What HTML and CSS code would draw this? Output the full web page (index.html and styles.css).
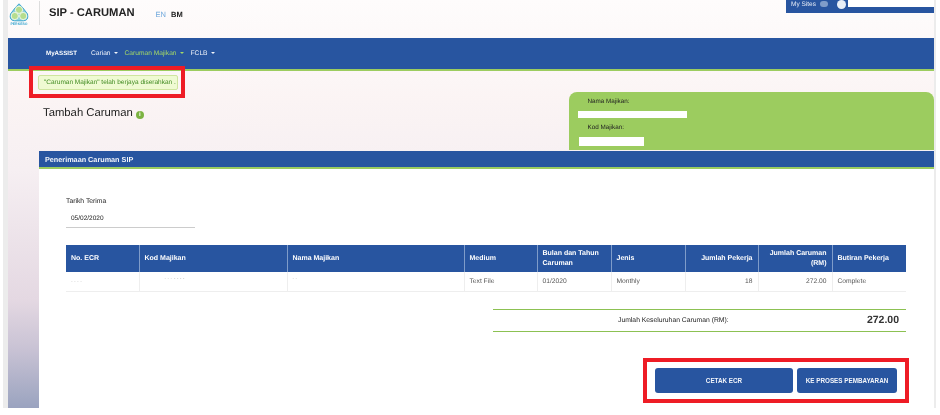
FILE: index.html
```html
<!DOCTYPE html>
<html lang="ms">
<head>
    <meta charset="UTF-8">
    <title>SIP - Caruman</title>
    <link rel="stylesheet" href="styles.css">
</head>
<body>
    <div class="frame">
        <div class="page">
            <!-- top bar -->
            <div class="topbar">
                <div class="logo">
                    <svg width="20" height="19" viewBox="0 0 20 19">
                        <path d="M10 0.8 L14 5 L18.5 11 Q20 17.5 14.5 17.8 L5.5 17.8 Q0 17.5 1.5 11 L6 5 Z" fill="#8fd0dc" stroke="#3fa8d0" stroke-width="1"/>
                        <circle cx="10" cy="6.8" r="3.6" fill="#b5dd8e" stroke="#eef8e6" stroke-width="1"/>
                        <circle cx="5.8" cy="13" r="3.6" fill="#b5dd8e" stroke="#eef8e6" stroke-width="1"/>
                        <circle cx="14.2" cy="13" r="3.6" fill="#b5dd8e" stroke="#eef8e6" stroke-width="1"/>
                    </svg>
                    <span class="logo-name">PERKESO</span>
                </div>
                <div class="divider"></div>
                <div class="app-name">SIP - CARUMAN</div>
                <div class="lang"><span class="lang-en">EN</span><span class="lang-bm">BM</span></div>
                <div class="sites">
                    <span class="sites-label">My Sites</span>
                    <span class="sites-arrow"></span>
                    <span class="avatar"></span>
                    <span class="sites-user"></span>
                </div>
            </div>

            <!-- menu -->
            <div class="menu">
                <a class="menu-first">MyASSIST</a>
                <a class="caret">Carian</a>
                <a class="caret active">Caruman Majikan</a>
                <a class="caret">FCLB</a>
            </div>

            <div class="intro">
                <div class="intro-left">
                    <div class="alert">"Caruman Majikan" telah berjaya diserahkan .</div>
                    <h1 class="title">Tambah Caruman <span class="info">i</span></h1>
                </div>
                <div class="employer">
                    <div class="employer-label">Nama Majikan:</div>
                    <div class="blank blank-name"></div>
                    <div class="employer-label">Kod Majikan:</div>
                    <div class="blank blank-code"></div>
                </div>
            </div>

            <div class="panel">
                <div class="panel-head">Penerimaan Caruman SIP</div>
                <div class="panel-body">
                    <div class="date-label">Tarikh Terima</div>
                    <div class="date-value">05/02/2020</div>

                    <table class="ecr">
                        <colgroup>
                            <col class="w73"><col class="w148"><col class="w177"><col class="w73"><col class="w74">
                            <col class="w74"><col class="w73"><col class="w74"><col class="w74">
                        </colgroup>
                        <thead>
                            <tr>
                                <th>No. ECR</th>
                                <th>Kod Majikan</th>
                                <th>Nama Majikan</th>
                                <th>Medium</th>
                                <th>Bulan dan Tahun Caruman</th>
                                <th>Jenis</th>
                                <th class="num">Jumlah Pekerja</th>
                                <th class="num">Jumlah Caruman (RM)</th>
                                <th>Butiran Pekerja</th>
                            </tr>
                        </thead>
                        <tbody>
                            <tr>
                                <td><span class="ghost ghost-low">- - - -</span></td>
                                <td><span class="ghost ghost-code">- - - - - - -</span></td>
                                <td><span class="ghost">- -</span></td>
                                <td>Text File</td>
                                <td>01/2020</td>
                                <td>Monthly</td>
                                <td class="num">18</td>
                                <td class="num">272.00</td>
                                <td>Complete</td>
                            </tr>
                        </tbody>
                    </table>

                    <div class="total">
                        <span class="total-label">Jumlah Keseluruhan Caruman (RM):</span>
                        <span class="total-value">272.00</span>
                    </div>

                    <div class="actions">
                        <button class="btn btn-print">CETAK ECR</button>
                        <button class="btn btn-pay">KE PROSES PEMBAYARAN</button>
                    </div>
                </div>
            </div>

            <!-- red marks drawn over the screenshot -->
            <div class="mark mark-alert"></div>
            <div class="mark mark-actions"></div>
        </div>
    </div>
</body>
</html>
```

FILE: styles.css
```css
* {
    margin: 0;
    padding: 0;
    box-sizing: border-box;
}

body {
    font-family: "Liberation Sans", Arial, sans-serif;
    background: white;
    color: #444;
    text-rendering: geometricPrecision;
}

.frame {
    width: 933px;
    height: 408px;
    margin-left: 3px;
    border-left: 5px solid #ececec;
    border-right: 2px solid #ececec;
    overflow: hidden;
}

/* the source picture is a soft, scaled-down capture */
.page {
    position: relative;
    height: 408px;
    background: linear-gradient(180deg, #fefcfc 0, #fbf4f4 100px, #f6eff2 170px, #e4d8e2 300px, #c8c2d4 350px, #9aa3bf 408px);
    filter: blur(0.3px);
}

/* top bar */
.topbar {
    display: flex;
    align-items: flex-start;
    height: 38px;
}

.logo {
    width: 20px;
    margin: 3px 0 0 1px;
    text-align: center;
    line-height: 0;
}

.logo-name {
    display: block;
    font-size: 3.5px;
    line-height: 4px;
    font-weight: bold;
    color: #3fa8d0;
}

.divider {
    width: 1px;
    height: 24px;
    margin: 1px 0 0 10px;
    background: #ddd;
}

.app-name {
    margin: 6px 0 0 9px;
    font-size: 11.2px;
    font-weight: bold;
    line-height: 14px;
    color: #222;
}

.lang {
    margin: 10px 0 0 21px;
    font-size: 7.5px;
    line-height: 9px;
}

.lang-en {
    color: #6fa8dc;
    padding-right: 5px;
}

.lang-bm {
    color: #222;
    font-weight: bold;
}

.sites {
    display: flex;
    align-items: center;
    width: 148px;
    height: 13px;
    margin-left: auto;
    padding: 0 0 5px 5px;
    background: #2855a0;
    color: #e8edf6;
    font-size: 6.5px;
}

.sites-label {
    white-space: nowrap;
}

.sites-arrow {
    width: 8px;
    height: 6px;
    margin-left: 4px;
    border-radius: 3px;
    background: #7f9cc9;
}

.avatar {
    width: 9px;
    height: 9px;
    margin-left: 9px;
    border-radius: 50%;
    background: #e8eef7;
}

.sites-user {
    width: 86px;
    height: 7px;
    margin: -2px 0 0 2px;
    background: white;
}

/* menu */
.menu {
    display: flex;
    align-items: center;
    height: 33px;
    padding-left: 38px;
    background: #2855a0;
    border-bottom: 2px solid #9ccc5f;
    font-size: 6.65px;
    color: #f2f5fa;
}

.menu a {
    margin-right: 7px;
}

.menu-first {
    font-size: 6.2px;
    font-weight: bold;
    color: white;
    margin-right: 14px !important;
}

.caret::after {
    content: "";
    display: inline-block;
    margin-left: 3px;
    vertical-align: middle;
    border-top: 2px solid currentColor;
    border-left: 2px solid transparent;
    border-right: 2px solid transparent;
}

.active {
    color: #a4d867;
}

/* alert, title and employer box */
.intro {
    display: flex;
    height: 79px;
}

.intro-left {
    padding: 4px 0 0 30px;
}

.alert {
    width: 140px;
    height: 15px;
    border: 1px solid #cfe59f;
    border-radius: 2px;
    background: #effad2;
    color: #3f8a20;
    font-size: 6.5px;
    line-height: 13px;
    padding-left: 5px;
    white-space: nowrap;
}

.title {
    margin: 15px 0 0 5px;
    font-size: 11.3px;
    line-height: 16px;
    font-weight: normal;
    color: #222;
}

.info {
    display: inline-block;
    width: 8px;
    height: 8px;
    margin-left: 0;
    border-radius: 50%;
    background: #7cb342;
    color: white;
    font-size: 6px;
    line-height: 8px;
    font-weight: bold;
    text-align: center;
    vertical-align: 0;
}

.employer {
    width: 365px;
    height: 58px;
    margin: 21px 0 0 auto;
    padding: 5px 0 0 18.5px;
    border-radius: 8px 8px 0 0;
    background: #9ccc5f;
    font-size: 6.3px;
    color: #222;
}

.employer-label {
    line-height: 9px;
}

.blank {
    height: 7px;
    margin: 5px 0 5px -9.5px;
    background: white;
}

.blank-name {
    width: 109px;
}

.blank-code {
    width: 65px;
    height: 9px;
    margin-left: -8.5px;
}

/* main panel */
.panel {
    margin: 1px 0 0 31px;
}

.panel-head {
    height: 18px;
    padding: 3.5px 0 0 6px;
    background: #2855a0;
    border-bottom: 2px solid #9ccc5f;
    color: #f2f5fa;
    font-size: 7.25px;
    line-height: 9px;
    font-weight: bold;
}

.panel-body {
    height: 239px;
    padding: 28px 28px 0 27px;
    background: white;
}

.date-label {
    font-size: 6.8px;
    line-height: 9px;
    color: #222;
}

.date-value {
    width: 129px;
    height: 19px;
    margin-top: 3px;
    padding: 5px 0 0 5px;
    border-bottom: 1px solid #ccc;
    font-size: 6.5px;
    line-height: 9px;
    color: #222;
}

.ecr {
    width: 840px;
    margin-top: 17px;
    border-collapse: collapse;
    table-layout: fixed;
    font-size: 6.7px;
}

.w73 { width: 73px; }
.w74 { width: 74px; }
.w148 { width: 148px; }
.w177 { width: 177px; }

.ecr th {
    height: 27px;
    padding: 0 5px;
    background: #2855a0;
    border-left: 1px solid #7f9cc9;
    color: white;
    font-size: 7px;
    font-weight: bold;
    line-height: 9.5px;
    text-align: left;
}

.ecr th:first-child,
.ecr td:first-child {
    border-left: none;
}

.ecr td {
    height: 19px;
    padding: 0 5px;
    border-left: 1px solid #eee;
    border-bottom: 1px solid #eee;
    color: #555;
}

.ecr .num {
    text-align: right;
}

.ghost {
    color: #aaa;
    font-size: 5px;
    vertical-align: 4px;
}

.ghost-low {
    vertical-align: -1px;
}

.ghost-code {
    margin-left: 20px;
    vertical-align: 5px;
}

.total {
    display: flex;
    align-items: center;
    justify-content: space-between;
    width: 413px;
    height: 23px;
    margin: 17px 0 0 427px;
    padding: 0 7px 0 125px;
    border-top: 1px solid #8cc152;
    border-bottom: 1px solid #8cc152;
    color: #222;
}

.total-label {
    font-size: 6.8px;
}

.total-value {
    font-size: 10.5px;
    font-weight: bold;
    color: #333;
}

.actions {
    display: flex;
    justify-content: flex-end;
    gap: 4px;
    margin: 36px 9px 0 0;
}

.btn {
    height: 25px;
    border: none;
    border-radius: 3px;
    background: #2855a0;
    color: #f2f5fa;
    font-family: inherit;
    font-size: 6.3px;
    font-weight: bold;
}

.btn-print {
    width: 138px;
}

.btn-pay {
    width: 100px;
}

/* red marks */
.mark {
    position: absolute;
    border: 4px solid #ee1c25;
}

.mark-alert {
    left: 21px;
    top: 66px;
    width: 156px;
    height: 32px;
}

.mark-actions {
    left: 635px;
    top: 358px;
    width: 266px;
    height: 45px;
}
```
